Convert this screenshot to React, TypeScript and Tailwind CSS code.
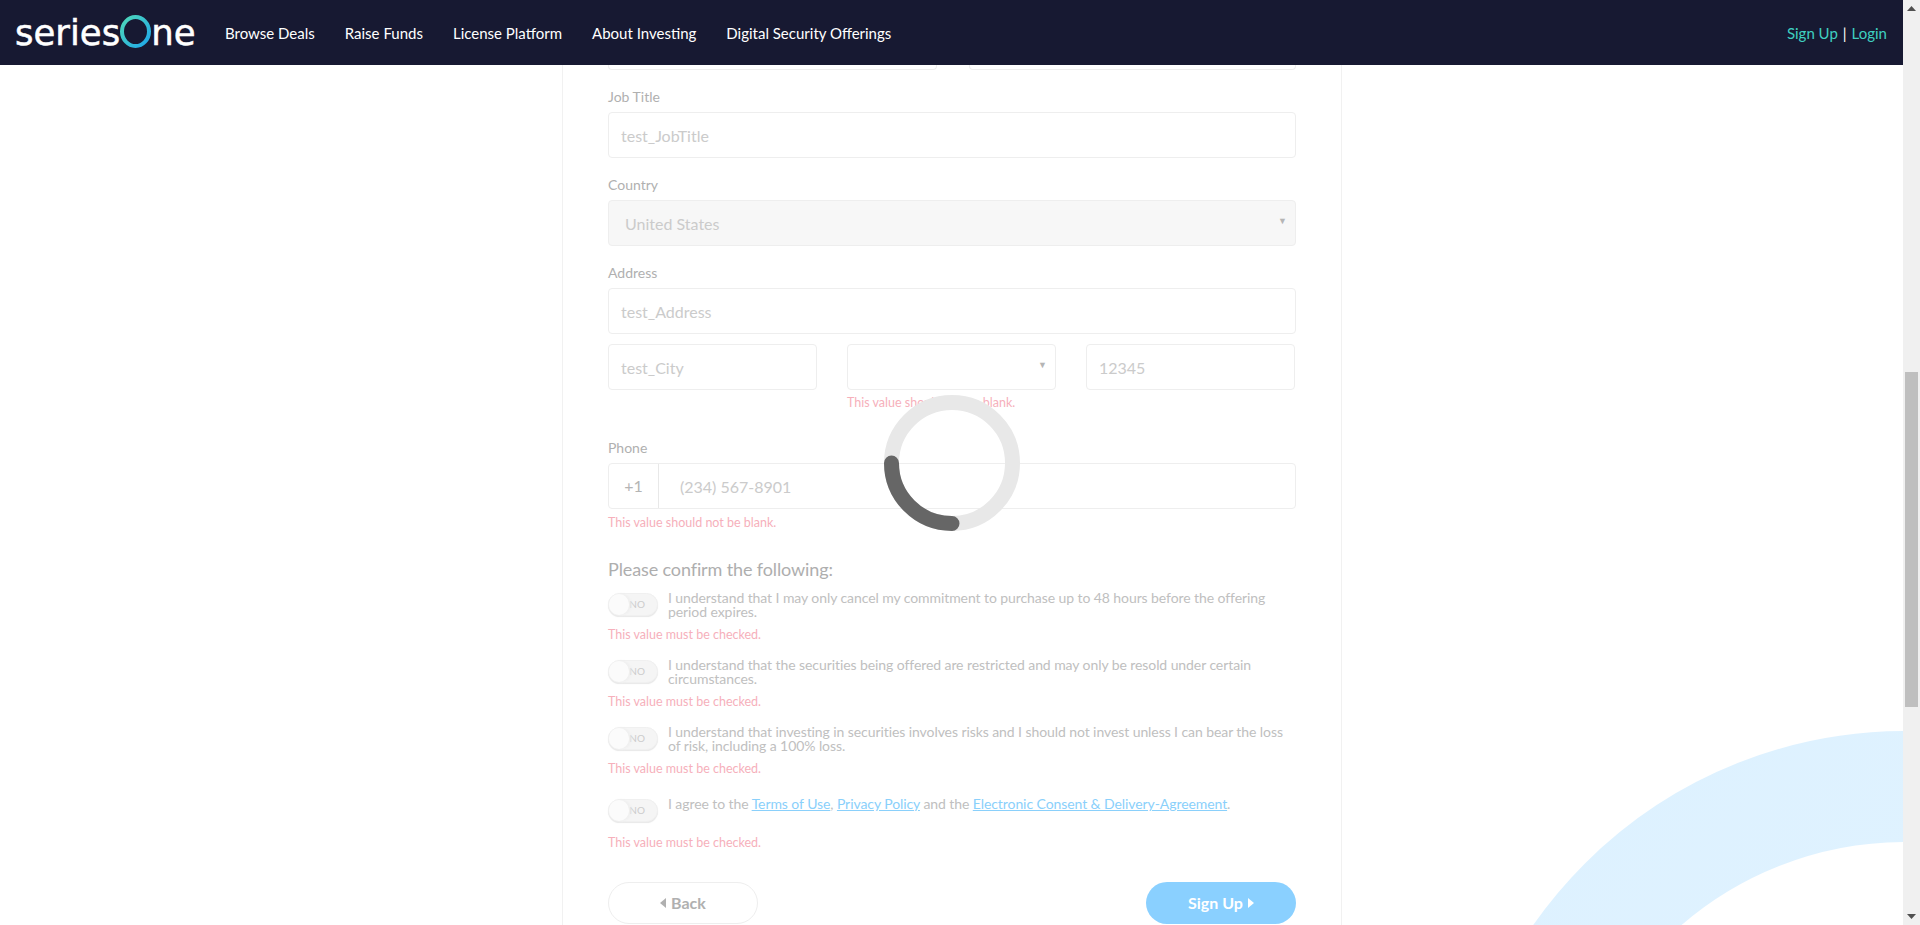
const navLinks = ['Browse Deals', 'Raise Funds', 'License Platform', 'About Investing', 'Digital Security Offerings']

const confirmations = [
  'I understand that I may only cancel my commitment to purchase up to 48 hours before the offering period expires.',
  'I understand that the securities being offered are restricted and may only be resold under certain circumstances.',
  'I understand that investing in securities involves risks and I should not invest unless I can bear the loss of risk, including a 100% loss.',
]

function Logo() {
  return (
    <div className="flex items-center w-[180px] text-white text-[35.5px] leading-none [-webkit-text-stroke:0.5px_white] font-['DejaVu_Sans',sans-serif]">
      <span>series</span>
      <svg width="31" height="33" viewBox="0 0 31 33" className="shrink-0 -mt-[2px]">
        <defs>
          <linearGradient id="ring" x1="0" y1="0" x2="1" y2="1">
            <stop offset="0" stopColor="#4fd8b8" />
            <stop offset="1" stopColor="#1ea7ea" />
          </linearGradient>
        </defs>
        <ellipse cx="15.5" cy="16.5" rx="13.5" ry="14.5" fill="none" stroke="url(#ring)" strokeWidth="4" />
      </svg>
      <span>ne</span>
    </div>
  )
}

function Header() {
  return (
    <header className="relative z-10 h-[65px] shrink-0 bg-[#171932] flex items-center pl-[15px] pr-[16px]">
      <Logo />
      <nav className="ml-[30px] pt-[1px] flex items-center gap-[30px] text-white text-[15px]">
        {navLinks.map((link) => (
          <a key={link} className="whitespace-nowrap">{link}</a>
        ))}
      </nav>
      <div className="ml-auto pt-[1px] flex items-center text-[15px] text-[#3fd0c0]">
        <a>Sign Up</a>
        <span className="mx-[5px] text-white">|</span>
        <a>Login</a>
      </div>
    </header>
  )
}

function Field({ value, className = 'bg-white px-[12px]' }: { value: string; className?: string }) {
  return (
    <div className={`h-[46px] border border-[#eeeeee] rounded-[4px] flex items-center pt-[1px] text-[16px] text-[#cbcbcb] ${className}`}>
      {value}
    </div>
  )
}

function Caret() {
  return <span className="absolute right-[9px] top-[16px] text-[9px] leading-none text-[#b5b5b5]">▼</span>
}

function Label({ children }: { children: string }) {
  return <div className="text-[14px] leading-[20px] text-[#b0b0b0] mb-[5px]">{children}</div>
}

function FieldError({ text }: { text: string }) {
  return <div className="text-[12.5px] leading-[18px] text-[#f6b0bb]">{text}</div>
}

function Toggle() {
  return (
    <div className="relative w-[50px] h-[23px] shrink-0 rounded-full bg-[#f5f5f5] border border-[#f0f0f0] shadow-[0_1px_1px_#e8e8e8] flex items-center justify-end pr-[12px] text-[10px] text-[#cccccc]">
      <span className="absolute left-0 top-0 w-[20px] h-[21px] rounded-full bg-[#fbfbfb] shadow-[2px_0_3px_#eeeeee]" />
      NO
    </div>
  )
}

function Spinner() {
  return (
    <svg width="136" height="136" viewBox="0 0 136 136" className="absolute left-[884px] top-[330px] z-20">
      <circle cx="68" cy="68" r="60.5" fill="none" stroke="#e8e8e8" strokeWidth="15" />
      <path d="M7.5 68A60.5 60.5 0 0 0 68 128.5" fill="none" stroke="#666666" strokeWidth="15" strokeLinecap="round" />
    </svg>
  )
}

function Backdrop() {
  return (
    <svg width="1903" height="860" viewBox="0 0 1903 860" className="absolute left-0 top-0">
      <defs>
        <linearGradient id="arc" x1="0" y1="0" x2="1" y2="1">
          <stop offset="0" stopColor="#ddf1ff" />
          <stop offset="1" stopColor="#e3f4ff" />
        </linearGradient>
      </defs>
      <circle cx="1905" cy="1119" r="397.5" fill="none" stroke="url(#arc)" strokeWidth="111" />
    </svg>
  )
}

export default function App() {
  return (
    <div className="h-[925px] flex overflow-hidden bg-white font-['Lato',sans-serif]">
      <div className="flex-1 min-w-0 flex flex-col">
        <Header />
        <main className="relative flex-1 overflow-hidden">
          <Backdrop />
          <Spinner />
          <form className="relative ml-[562px] w-[780px] h-[860px] border-x border-[#f1f1f1] px-[45px] pt-[4px]">
            {/* row scrolled under the header */}
            <div className="flex gap-[32px] h-0">
              <div className="w-[330px] h-[5px] -mt-[4px] border-b border-x border-[#eeeeee] rounded-b-[4px]" />
              <div className="w-[328px] h-[5px] -mt-[4px] border-b border-x border-[#eeeeee] rounded-b-[4px]" />
            </div>

            <div className="pt-[18px]">
              <Label>Job Title</Label>
              <Field value="test_JobTitle" />
            </div>
            <div className="pt-[17px]">
              <Label>Country</Label>
              <div className="relative">
                <Field value="United States" className="bg-[#f7f7f7] px-[16px]" />
                <Caret />
              </div>
            </div>
            <div className="pt-[17px]">
              <Label>Address</Label>
              <Field value="test_Address" />
            </div>
            <div className="mt-[10px] grid grid-cols-[209px_209px_209px] gap-x-[30px]">
              <Field value="test_City" />
              <div>
                <div className="relative">
                  <Field value="" />
                  <Caret />
                </div>
                <div className="mt-[4px]"><FieldError text="This value should not be blank." /></div>
              </div>
              <Field value="12345" />
            </div>

            <div className="pt-[26px]">
              <Label>Phone</Label>
              <div className="flex h-[46px] border border-[#eeeeee] rounded-[4px] bg-white text-[16px]">
                <div className="w-[50px] flex items-center justify-center border-r border-[#e8e8e8] text-[#b4b4b4]">+1</div>
                <div className="flex-1 flex items-center pl-[21px] pt-[1px] text-[#cbcbcb]">(234) 567-8901</div>
              </div>
              <div className="mt-[5px]"><FieldError text="This value should not be blank." /></div>
            </div>

            <div className="mt-[25px] text-[18px] leading-[24px] tracking-[-0.12px] text-[#aeaeae]">Please confirm the following:</div>

            <div className="mt-[12px] flex flex-col gap-[16px]">
              {confirmations.map((text) => (
                <div key={text}>
                  <div className="flex gap-[10px]">
                    <Toggle />
                    <p className="-mt-[2px] text-[14px] leading-[14px] tracking-[-0.08px] text-[#c0c0c0]">{text}</p>
                  </div>
                  <div className="mt-[7px]"><FieldError text="This value must be checked." /></div>
                </div>
              ))}
              <div className="mt-[5px]">
                <div className="flex gap-[10px]">
                  <Toggle />
                  <p className="-mt-[2px] text-[14px] leading-[14px] tracking-[-0.08px] text-[#c0c0c0]">
                    I agree to the <a className="text-[#8ad0fb] underline">Terms of Use</a>, <a className="text-[#8ad0fb] underline">Privacy Policy</a> and the <a className="text-[#8ad0fb] underline">Electronic Consent &amp; Delivery-Agreement</a>.
                  </p>
                </div>
                <div className="mt-[12px]"><FieldError text="This value must be checked." /></div>
              </div>
            </div>

            <div className="mt-[30px] flex justify-between">
              <button type="button" className="w-[150px] h-[42px] rounded-full border border-[#eeeeee] bg-white text-[16px] font-bold text-[#b0b0b0] flex items-center justify-center gap-[5px]">
                <svg width="6" height="10" viewBox="0 0 6 10"><path d="M6 0v10L0 5z" fill="#b0b0b0" /></svg>
                Back
              </button>
              <button type="button" className="w-[150px] h-[42px] rounded-full bg-[#8ad0ff] text-[16px] font-bold text-white flex items-center justify-center gap-[5px]">
                Sign Up
                <svg width="6" height="10" viewBox="0 0 6 10"><path d="M0 0v10l6-5z" fill="#ffffff" /></svg>
              </button>
            </div>
          </form>
        </main>
      </div>

      {/* page scrollbar */}
      <div className="w-[17px] shrink-0 bg-[#f0f0f0] flex flex-col items-center">
        <svg width="9" height="17" viewBox="0 0 9 17" className="shrink-0"><path d="M0 11h9L4.5 6z" fill="#505050" /></svg>
        <div className="h-[355px] shrink-0" />
        <div className="w-[13px] h-[335px] shrink-0 bg-[#bfbfbf]" />
        <div className="flex-1" />
        <svg width="9" height="17" viewBox="0 0 9 17" className="shrink-0"><path d="M0 6h9l-4.5 5z" fill="#505050" /></svg>
      </div>
    </div>
  )
}
